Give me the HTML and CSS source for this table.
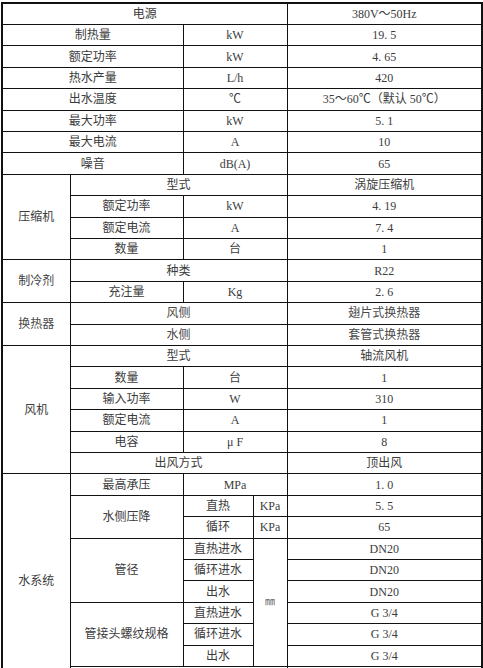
FILE: index.html
```html
<!DOCTYPE html>
<html lang="zh-CN">
<head>
<meta charset="utf-8">
<title>参数表</title>
<link rel="stylesheet" href="styles.css">
</head>
<body>
<div class="page">
<table class="spec">
  <colgroup>
    <col class="c-a"><col class="c-b"><col class="c-c"><col class="c-d"><col class="c-e">
  </colgroup>
  <tbody>
    <tr><td colspan="4">电源</td><td>380V～50Hz</td></tr>
    <tr><td colspan="2">制热量</td><td colspan="2">kW</td><td>19. 5</td></tr>
    <tr><td colspan="2">额定功率</td><td colspan="2">kW</td><td>4. 65</td></tr>
    <tr><td colspan="2">热水产量</td><td colspan="2">L/h</td><td>420</td></tr>
    <tr><td colspan="2">出水温度</td><td colspan="2">℃</td><td>35～60℃（默认 50℃）</td></tr>
    <tr><td colspan="2">最大功率</td><td colspan="2">kW</td><td>5. 1</td></tr>
    <tr><td colspan="2">最大电流</td><td colspan="2">A</td><td>10</td></tr>
    <tr><td colspan="2">噪音</td><td colspan="2">dB(A)</td><td>65</td></tr>

    <tr><td rowspan="4">压缩机</td><td colspan="3">型式</td><td>涡旋压缩机</td></tr>
    <tr><td>额定功率</td><td colspan="2">kW</td><td>4. 19</td></tr>
    <tr><td>额定电流</td><td colspan="2">A</td><td>7. 4</td></tr>
    <tr><td>数量</td><td colspan="2">台</td><td>1</td></tr>

    <tr><td rowspan="2">制冷剂</td><td colspan="3">种类</td><td>R22</td></tr>
    <tr><td>充注量</td><td colspan="2">Kg</td><td>2. 6</td></tr>

    <tr class="faded"><td rowspan="2" class="dash-b">换热器</td><td colspan="3" class="dash-b">风侧</td><td class="dash-b">翅片式换热器</td></tr>
    <tr class="faded"><td colspan="3" class="dash-b">水侧</td><td class="dash-b">套管式换热器</td></tr>

    <tr><td rowspan="6">风机</td><td colspan="3">型式</td><td>轴流风机</td></tr>
    <tr><td>数量</td><td colspan="2">台</td><td>1</td></tr>
    <tr><td>输入功率</td><td colspan="2">W</td><td>310</td></tr>
    <tr><td>额定电流</td><td colspan="2">A</td><td>1</td></tr>
    <tr><td>电容</td><td colspan="2">μ F</td><td>8</td></tr>
    <tr><td colspan="3">出风方式</td><td>顶出风</td></tr>

    <tr><td rowspan="10">水系统</td><td>最高承压</td><td colspan="2">MPa</td><td>1. 0</td></tr>
    <tr><td rowspan="2">水侧压降</td><td>直热</td><td>KPa</td><td>5. 5</td></tr>
    <tr><td>循环</td><td>KPa</td><td>65</td></tr>
    <tr><td rowspan="3">管径</td><td>直热进水</td><td rowspan="6" class="tiny">㎜</td><td>DN20</td></tr>
    <tr><td>循环进水</td><td>DN20</td></tr>
    <tr><td>出水</td><td>DN20</td></tr>
    <tr><td rowspan="3">管接头螺纹规格</td><td>直热进水</td><td>G 3/4</td></tr>
    <tr><td>循环进水</td><td>G 3/4</td></tr>
    <tr><td>出水</td><td>G 3/4</td></tr>
    <tr><td colspan="3"></td><td></td></tr>
  </tbody>
</table>
</div>
</body>
</html>
```
FILE: styles.css
```css
html, body {
  margin: 0;
  padding: 0;
  background: #ffffff;
}

.page {
  padding: 2px 0 0 1px;
}

.spec {
  border-collapse: collapse;
  table-layout: fixed;
  width: 481px;
  border: 2px solid #111;
  font-family: "Liberation Serif", "Noto Sans CJK SC", serif;
  font-size: 12px;
  color: #3c3c3c;
}

.c-a { width: 68px; }
.c-b { width: 113px; }
.c-c { width: 70px; }
.c-d { width: 34px; }
.c-e { width: 195px; }

.spec tr {
  height: 21.42px;
}

.spec td {
  border: 1px solid #111;
  padding: 0;
  text-align: center;
  vertical-align: middle;
  line-height: 14px;
  white-space: nowrap;
  overflow: hidden;
}

.spec td.dash-b {
  border-bottom: 1px dashed #555;
}

.faded td {
  color: #4a4a4a;
}

.spec td.tiny {
  font-size: 10px;
  color: #666;
}
```
